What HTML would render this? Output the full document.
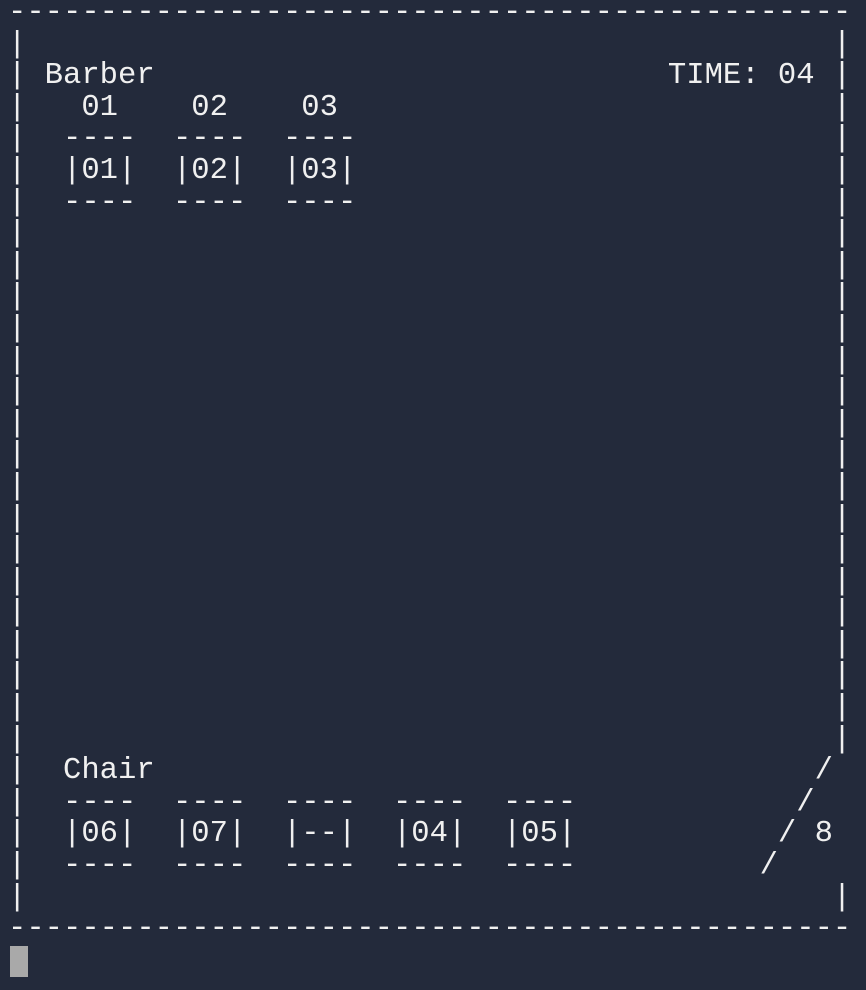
<!DOCTYPE html>
<html><head><meta charset="utf-8"><style>
html,body{margin:0;padding:0;background:#232a3b;width:866px;height:990px;overflow:hidden}
pre{position:absolute;left:8px;top:-2px;margin:0;font-family:"Liberation Mono",monospace;font-size:30.55px;line-height:31.6px;color:#f0f0f0;white-space:pre}
.cur{position:absolute;left:10px;top:946px;width:18px;height:31px;background:#a9a9a9}
</style></head><body>
<pre>----------------------------------------------
|                                            |
| Barber                            TIME: 04 |
|   01    02    03                           |
|  ----  ----  ----                          |
|  |01|  |02|  |03|                          |
|  ----  ----  ----                          |
|                                            |
|                                            |
|                                            |
|                                            |
|                                            |
|                                            |
|                                            |
|                                            |
|                                            |
|                                            |
|                                            |
|                                            |
|                                            |
|                                            |
|                                            |
|                                            |
|                                            |
|  Chair                                    /
|  ----  ----  ----  ----  ----            /
|  |06|  |07|  |--|  |04|  |05|           / 8
|  ----  ----  ----  ----  ----          /
|                                            |
----------------------------------------------</pre>
<div class="cur"></div>
</body></html>
